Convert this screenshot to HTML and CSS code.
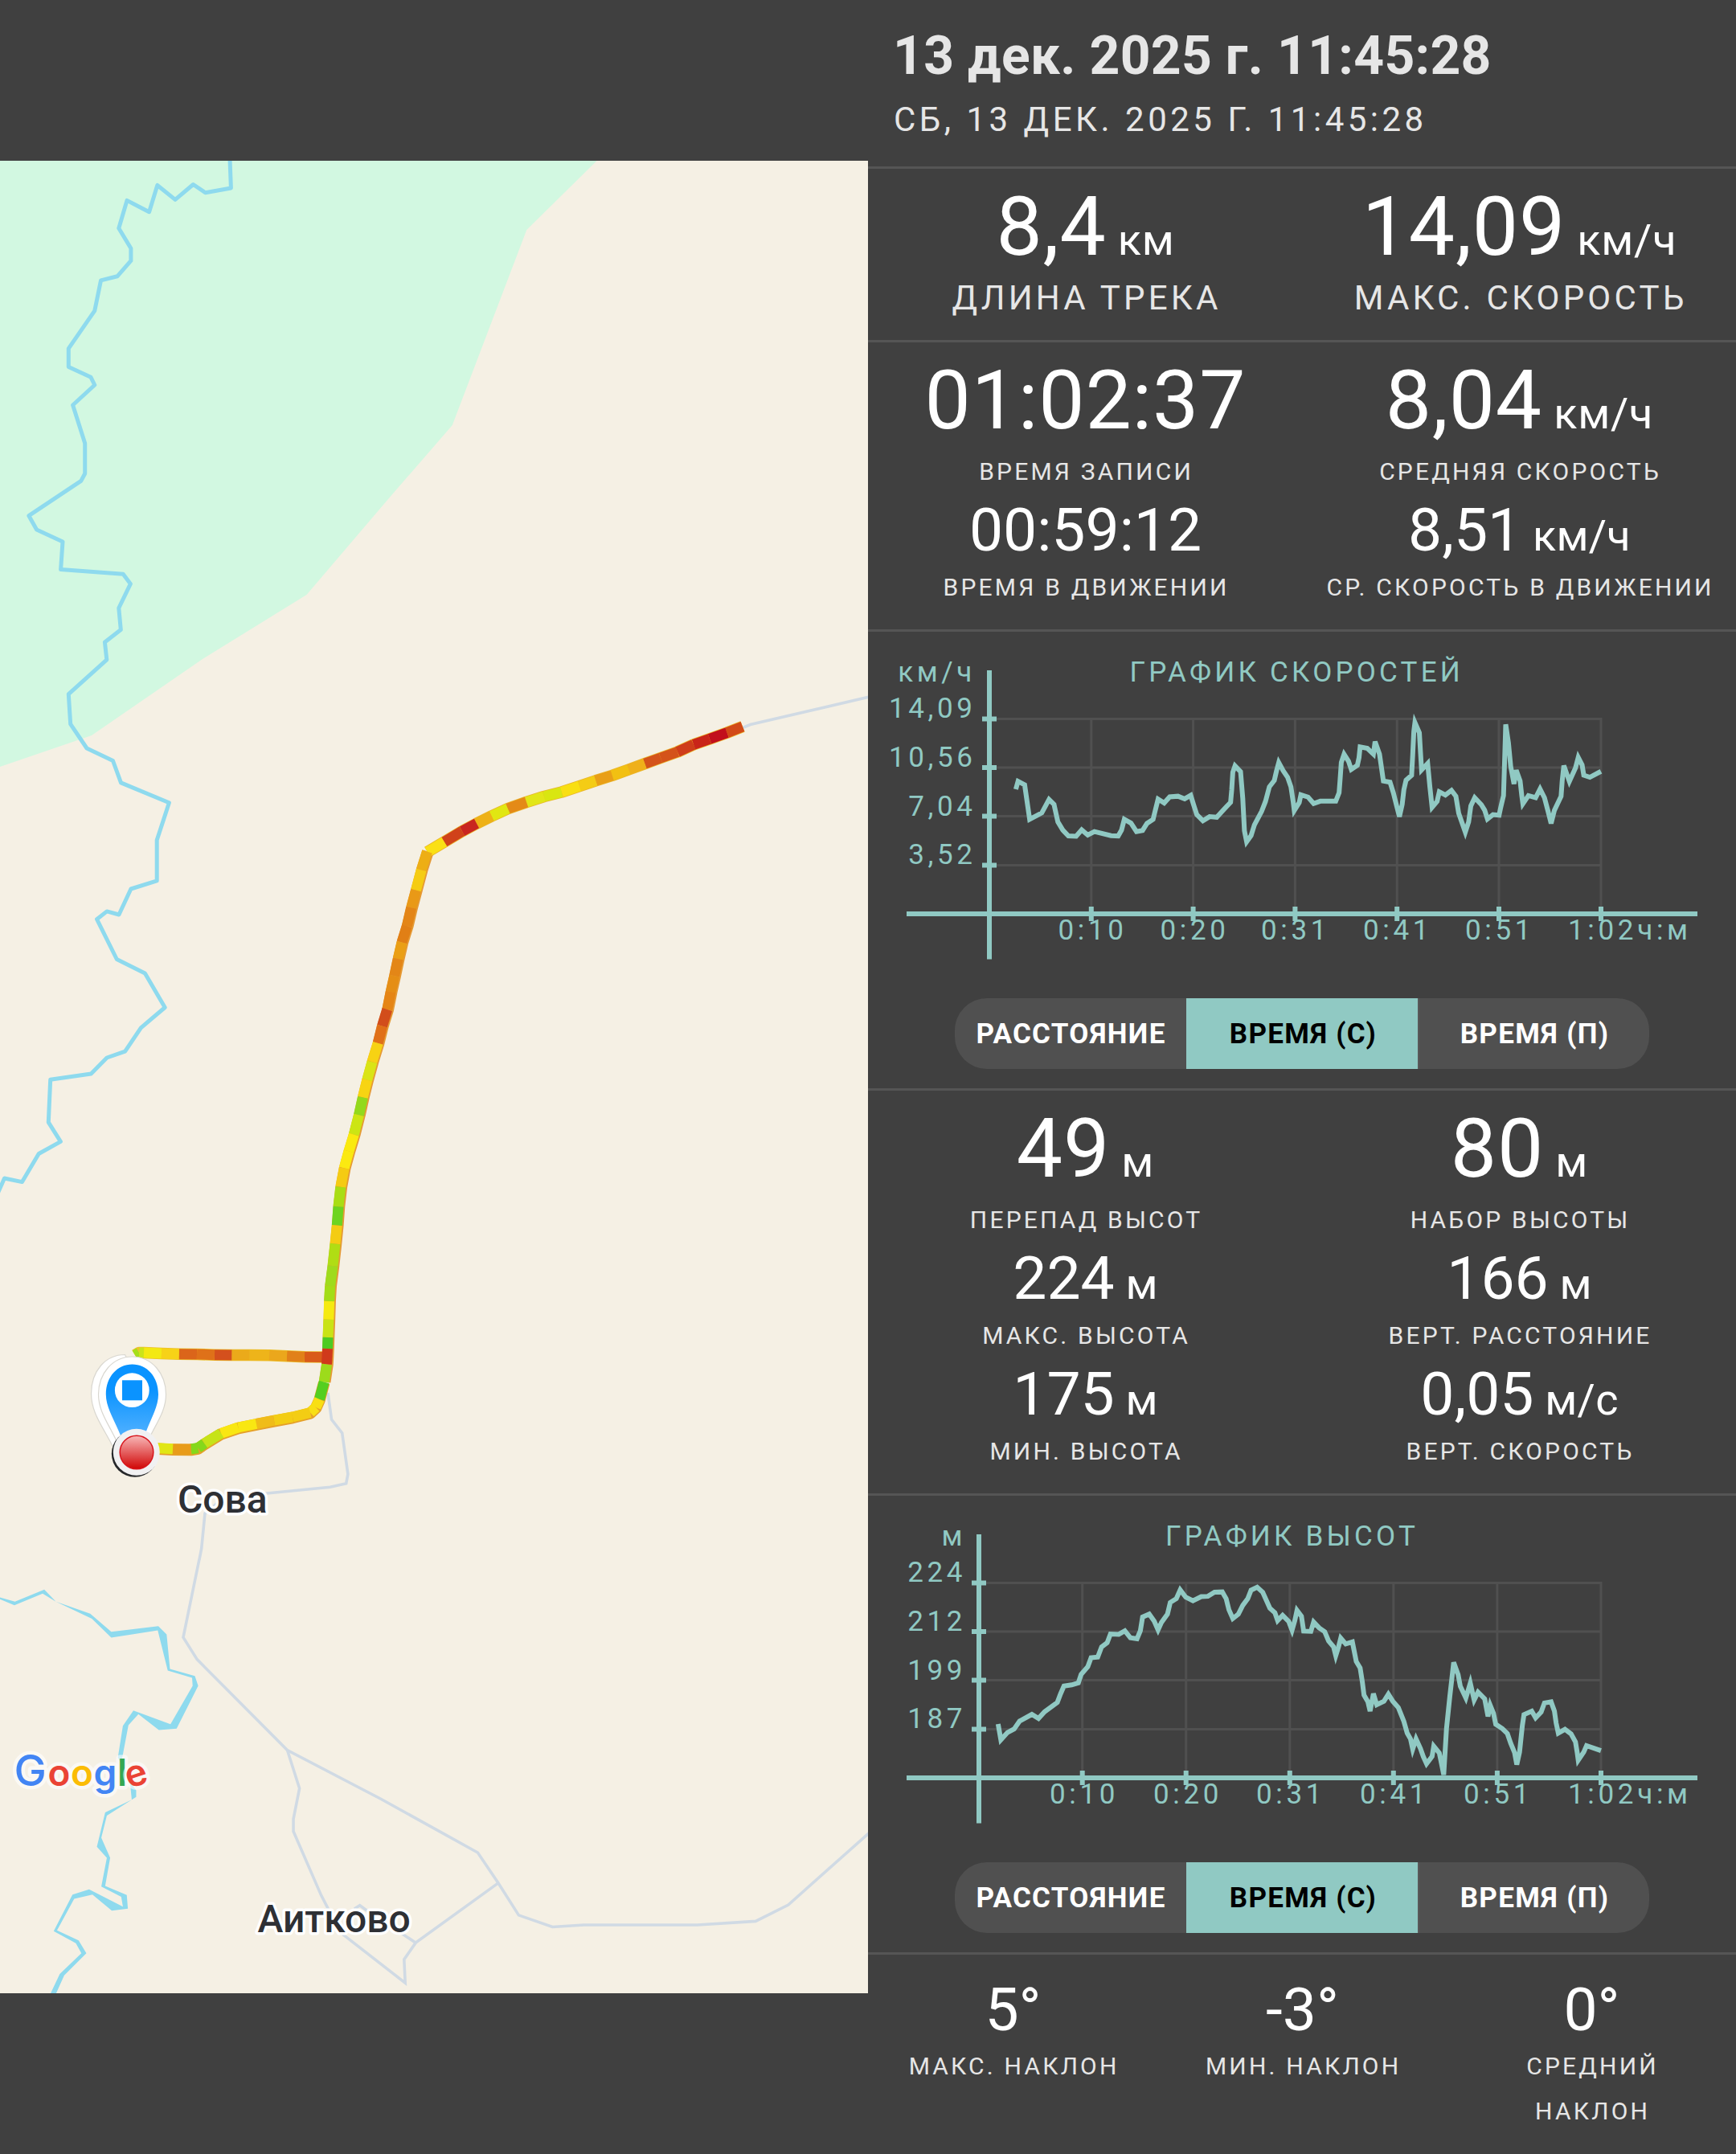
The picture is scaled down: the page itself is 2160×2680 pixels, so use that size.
FILE: index.html
```
<!DOCTYPE html>
<html lang="ru">
<head>
    <meta charset="UTF-8">
    <meta name="viewport" content="width=device-width, initial-scale=1.0">
    <title>13 дек. 2025 г. 11:45:28</title>
    <link rel="stylesheet" href="styles.css">
</head>
<body>
    <main class="screen">
        <!-- Карта с треком -->
        <section class="map-pane">
            <svg class="map" viewBox="0 200 1080 2280">
                <defs>
                    <linearGradient id="pin-blue" x1="0" y1="0" x2="0" y2="1">
                        <stop offset="0" stop-color="#0a93ff"/>
                        <stop offset="0.35" stop-color="#0a93ff"/>
                        <stop offset="1" stop-color="#4fb0ff"/>
                    </linearGradient>
                    <linearGradient id="dot-red" x1="0" y1="0" x2="0" y2="1">
                        <stop offset="0" stop-color="#f8b8b8"/>
                        <stop offset="1" stop-color="#d00505"/>
                    </linearGradient>
                </defs>

                <!-- лес -->
                <path class="forest" d="M0 200H742.6L655.3 286 562.8 529 484.7 619 381.5 740 252 820 114 915 0 954Z"/>

                <!-- реки -->
                <polyline class="river" points="286,198 287.4,234 255.5,239.7 240.4,229.5 218,248.4 195.8,230.5 185.6,263.7 158,249.4 147.8,284 162.9,309 162.9,324.4 145.9,343.8 125.5,348.9 117.8,386.6 85.3,433.6 85.3,456.5 113,469.3 117.8,479 90.6,504 105.7,551.4 105.7,589.2 100.8,598.4 35.9,641.7 45.6,659 78,673.9 75.6,708.6 153.2,714.2 162.4,726.4 147.8,756.5 150.3,783.6 130.4,798.9 132.8,820.8 85.3,863.7 87.7,900.9 108,931 140.5,946.5 150.5,973.9 210.4,998.8 195.2,1045.3 195.2,1095.9 162.9,1106 148,1138 133,1133.9 120.5,1143.7 145.3,1193.5 180.4,1211 205.2,1253.5 175.3,1278.8 155.6,1308.2 133,1316 113.3,1336 62.7,1343.3 60.3,1396.3 75.4,1420.4 48.2,1435.5 27.5,1470.6 5.5,1466 -3,1485"/>
                <g transform="translate(0 1940) scale(.68878 .35714)">
                    <path class="river-area" d="M0 133L27 148 80 106 101 148 163 190 201 253 286 233 301 262 307 382 352 407 358 441 319 590 287 595 250 540 232 578 220 700 236 780 246 805 246 828 193 893 183 970 199 1040 190 1138 229 1170 231 1217 202 1224 167 1168 134 1183 103 1293 142 1328 156 1373 116 1450 101 1514H91L108 1445 147 1373 137 1338 97 1296 131 1168 161 1150 222 1210 219 1176 183 1140 193 1040 175 1002 190 882 238 838 235 780 213 690 222 580 241 527 308 575 348 441 347 413 303 388 285 248 201 273 166 207 101 148 77 120 26 160 0 139Z"/>
                    <!-- дороги внизу -->
                    <g class="road">
                        <polyline points="360,0 331,272 356,349 519,665 688,835 863,1022 900,1128 937,1240 998,1281 1055,1274 1260,1274 1365,1261 1424,1204 1572,950"/>
                        <polyline points="519,665 541,798 530,905 530,948 580,1170 592,1215 620,1308 732,1476 730,1394 751,1336 900,1128"/>
                        <polyline points="751,1336 660,1220 650,1206 640,1218"/>
                    </g>
                </g>
                <g class="road">
                    <polyline points="408,1733 412.5,1766 425.7,1783 432.9,1834 430.7,1845.7 410.7,1850.3 332,1858 278,1864 255,1883 250.7,1926.7 248,1940.5"/>
                    <polyline points="923.8,905.7 933.6,901.5 1082,867"/>
                </g>

                <!-- цветные отрезки трека рисует скрипт -->
                <g id="track"></g>

                <!-- финиш -->
                <path class="pin-back" d="M155.5 1685.5C131 1685.5 113.5 1706 113.5 1734C113.5 1758 128 1775 141 1801H169L190 1750Z"/>
                <path class="pin-front" d="M164.5 1688C140 1688 122.5 1709 122.5 1735C122.5 1759 139 1776 150 1804H179C190 1776 206.5 1759 206.5 1735C206.5 1709 189 1688 164.5 1688Z"/>
                <path fill="url(#pin-blue)" d="M164.5 1697.5C146 1697.5 131.8 1713 131.8 1735C131.8 1751 142 1766 150 1786H180C187 1766 197 1751 197 1735C197 1713 183 1697.5 164.5 1697.5Z"/>
                <circle cx="164.3" cy="1729.7" r="21.4" fill="#fff"/>
                <rect x="152" y="1717.3" width="25" height="25" fill="#0a93ff"/>

                <!-- старт -->
                <circle cx="167.8" cy="1808.8" r="29" fill="#26282a"/>
                <circle cx="169.8" cy="1806.8" r="29" fill="#f1f1f2"/>
                <circle cx="170" cy="1807" r="20.8" fill="url(#dot-red)" stroke="#d8141c" stroke-width="1.5"/>

                <text class="place" x="221" y="1881.5">Сова</text>
                <text class="place" x="320.5" y="2403.5">Аитково</text>
                <text class="google" y="2222"><tspan class="google-g" x="17.5" fill="#4285f4">G</tspan><tspan x="59.5" fill="#ea4335">o</tspan><tspan x="88" fill="#fbbc05">o</tspan><tspan x="116.500" fill="#4285f4">g</tspan><tspan x="146" fill="#34a853">l</tspan><tspan x="160.500" dy="3.500" rotate="-18" fill="#ea4335">e</tspan></text>
            </svg>
        </section>

        <!-- Статистика -->
        <section class="stats-pane">
            <header class="track-header">
                <h1>13 дек. 2025 г. 11:45:28</h1>
                <p>Сб, 13 дек. 2025 г. 11:45:28</p>
            </header>

            <div class="block block-main">
                <div class="col">
                    <div class="value big">8,4<span class="unit"> км</span></div>
                    <div class="label large">Длина трека</div>
                </div>
                <div class="col">
                    <div class="value big">14,09<span class="unit"> км/ч</span></div>
                    <div class="label large">Макс. скорость</div>
                </div>
            </div>

            <div class="block">
                <div class="col">
                    <div class="value big">01:02:37</div>
                    <div class="label">Время записи</div>
                    <div class="value">00:59:12</div>
                    <div class="label">Время в движении</div>
                </div>
                <div class="col">
                    <div class="value big">8,04<span class="unit"> км/ч</span></div>
                    <div class="label">Средняя скорость</div>
                    <div class="value">8,51<span class="unit"> км/ч</span></div>
                    <div class="label">Ср. скорость в движении</div>
                </div>
            </div>

            <div class="chart-block">
                <svg class="chart" viewBox="0 0 1080 456">
                    <path class="grid" d="M151 108.5H912M151 169H912M151 229.5H912M151 290.5H912M277.8 108V351M404.6 108V351M531.4 108V351M658.2 108V351M785 108V351M912 107V351"/>
                    <path class="axis" d="M48 351H1032M151 48V407.5"/>
                    <path class="axis" d="M142 108.5H160M142 169H160M142 229.5H160M142 290.5H160M277.8 342V360M404.6 342V360M531.4 342V360M658.2 342V360M785 342V360M912 342V360"/>
                    <g transform="translate(0 4) scale(.68878 .36352)">
                        <polyline class="curve" points="267,528 271,501 283,513 292,631 314,609 327,563 336,580 343,640 352,668 362,688 376,689 386,667 397,685 409,673 439,687 452,688 458,668 463,631 475,644 485,673 496,669 504,645 515,631 519,600 524,562 535,575 545,554 560,552 572,561 583,549 588,580 594,615 605,636 617,622 630,624 643,597 655,573 657,530 659,470 663,448 673,468 677,560 680,670 684,708 692,687 698,650 711,604 718,570 725,520 734,498 738,465 742,437 750,465 758,487 764,520 768,570 770,601 779,574 782,547 795,555 805,577 817,569 845,569 851,540 853,490 855,436 860,408 868,432 873,460 884,446 887,420 889,383 902,388 913,408 916,365 924,408 928,460 931,500 943,504 949,540 955,585 960,622 965,580 968,530 972,497 982,480 984,410 986,330 988,300 996,335 998,400 1000,462 1011,440 1015,520 1019,590 1028,570 1032,537 1043,548 1054,532 1062,552 1067,610 1074,648 1079,675 1085,640 1089,585 1096,557 1108,581 1114,600 1119,630 1129,615 1140,617 1143,590 1148,550 1150,430 1152,306 1157,370 1161,450 1167,510 1171,463 1178,500 1181,550 1183,578 1193,550 1206,557 1214,527 1222,557 1228,600 1234,645 1240,600 1252,552 1254,500 1257,447 1267,501 1278,455 1283,419 1290,445 1293,480 1304,487 1324,467"/>
                    </g>
                    <text class="chart-title" x="533.2" y="61.8">ГРАФИК СКОРОСТЕЙ</text>
                    <g class="y-labels">
                        <text x="134" y="61.8">км/ч</text>
                        <text x="134.5" y="106.5">14,09</text>
                        <text x="134.5" y="167.5">10,56</text>
                        <text x="134.5" y="228.5">7,04</text>
                        <text x="134.5" y="289">3,52</text>
                    </g>
                    <g class="x-labels">
                        <text x="279.5" y="383">0:10</text>
                        <text x="406.5" y="383">0:20</text>
                        <text x="532" y="383">0:31</text>
                        <text x="659" y="383">0:41</text>
                        <text x="786" y="383">0:51</text>
                        <text x="914" y="383">1:02</text>
                        <text x="991" y="383">ч:м</text>
                    </g>
                </svg>
                <div class="tabs">
                    <button class="tab">РАССТОЯНИЕ</button>
                    <button class="tab active">ВРЕМЯ (С)</button>
                    <button class="tab">ВРЕМЯ (П)</button>
                </div>
            </div>

            <div class="block">
                <div class="col">
                    <div class="value big">49<span class="unit"> м</span></div>
                    <div class="label">Перепад высот</div>
                    <div class="value">224<span class="unit"> м</span></div>
                    <div class="label">Макс. высота</div>
                    <div class="value">175<span class="unit"> м</span></div>
                    <div class="label">Мин. высота</div>
                </div>
                <div class="col">
                    <div class="value big">80<span class="unit"> м</span></div>
                    <div class="label">Набор высоты</div>
                    <div class="value">166<span class="unit"> м</span></div>
                    <div class="label">Верт. расстояние</div>
                    <div class="value">0,05<span class="unit"> м/с</span></div>
                    <div class="label">Верт. скорость</div>
                </div>
            </div>

            <div class="chart-block">
                <svg class="chart" viewBox="0 0 1080 456">
                    <path class="grid" d="M138 108.5H912M138 169H912M138 229.5H912M138 290.5H912M266.7 108V351M395.7 108V351M524.8 108V351M653.8 108V351M782.9 108V351M912 107V351"/>
                    <path class="axis" d="M48 351H1032M138 48V407.5"/>
                    <path class="axis" d="M129 108.5H147M129 169H147M129 229.5H147M129 290.5H147M266.7 342V360M395.7 342V360M524.8 342V360M653.8 342V360M782.9 342V360M912 342V360"/>
                    <g transform="translate(0 -1) scale(.68878 .36352)">
                        <polyline class="curve" points="235,784 240,838 252,813 264,801 274,774 296,751 308,765 319,742 342,710 348,680 354,654 368,650 380,643 385,614 397,588 403,557 415,555 422,520 432,506 438,476 453,477 464,465 474,489 486,492 492,465 496,418 508,408 517,432 524,462 530,437 541,408 546,368 557,355 564,325 574,350 587,362 602,348 614,347 626,333 640,332 647,355 652,393 659,423 669,408 677,378 686,355 692,326 703,316 713,333 719,358 726,388 735,403 740,430 749,412 760,433 766,463 771,430 775,395 783,415 787,466 800,467 805,435 815,455 825,468 832,500 841,520 845,550 850,520 854,490 863,510 875,503 882,570 889,592 893,640 896,685 903,708 907,740 913,680 919,718 932,706 940,682 948,706 958,728 968,775 974,815 980,835 984,870 990,835 998,868 1003,895 1009,920 1019,895 1022,860 1032,883 1036,920 1040,958 1045,800 1051,690 1058,573 1066,615 1070,655 1080,695 1088,644 1095,702 1102,675 1114,698 1120,758 1124,720 1130,748 1134,785 1146,800 1155,817 1161,850 1168,882 1172,923 1177,880 1182,790 1185,752 1199,740 1206,763 1216,743 1222,712 1234,708 1240,740 1243,780 1247,815 1259,802 1270,818 1278,845 1281,880 1283,908 1293,880 1298,858 1324,875"/>
                    </g>
                    <text class="chart-title" x="527.5" y="61.8">ГРАФИК ВЫСОТ</text>
                    <g class="y-labels">
                        <text x="122" y="61.8">м</text>
                        <text x="122" y="106.5">224</text>
                        <text x="122" y="167.5">212</text>
                        <text x="122" y="228.5">199</text>
                        <text x="122" y="289">187</text>
                    </g>
                    <g class="x-labels">
                        <text x="269" y="383">0:10</text>
                        <text x="398" y="383">0:20</text>
                        <text x="526" y="383">0:31</text>
                        <text x="655" y="383">0:41</text>
                        <text x="784" y="383">0:51</text>
                        <text x="914" y="383">1:02</text>
                        <text x="991" y="383">ч:м</text>
                    </g>
                </svg>
                <div class="tabs">
                    <button class="tab">РАССТОЯНИЕ</button>
                    <button class="tab active">ВРЕМЯ (С)</button>
                    <button class="tab">ВРЕМЯ (П)</button>
                </div>
            </div>

            <div class="block block-slope">
                <div class="col">
                    <div class="value">5°</div>
                    <div class="label">Макс. наклон</div>
                </div>
                <div class="col">
                    <div class="value">-3°</div>
                    <div class="label">Мин. наклон</div>
                </div>
                <div class="col">
                    <div class="value">0°</div>
                    <div class="label">Средний наклон</div>
                </div>
            </div>
        </section>
    </main>

    <script>
        // Точки трека: x, y и цвет отрезка, который ведёт в эту точку
        var out = [
            [924, 904], [904.6, 911.6, '#d24a17'], [883, 919.4, '#c20f1c'], [863, 926.3, '#c92419'], [843, 935.5, '#cf3d1a'],
            [822, 943, '#d4531a'], [802.3, 950.2, '#d4531a'], [782.2, 957.5, '#efb01a'], [761.7, 964.9, '#f2c012'],
            [741.2, 971.3, '#e99f17'], [721, 978.2, '#f4cc15'], [698.8, 985.5, '#f9df12'], [676.9, 991, '#d9e611'],
            [655, 998, '#e2e618'], [631.8, 1006.2, '#e48a17'], [611.7, 1015.4, '#e1e712'], [593, 1024.6, '#eeb116'],
            [575, 1034.2, '#c9251f'], [552.8, 1047.5, '#d0421a'], [531.8, 1060, '#fae015']
        ];
        var back = [
            [531.5, 1059.5], [524.2, 1082.4, '#edae15'], [517.5, 1107.7, '#f5cc13'], [511.7, 1129.3, '#e99917'],
            [506.3, 1152.2, '#e38517'], [500, 1172.4, '#e17f15'], [495.2, 1193, '#ea9f15'], [490.7, 1214.2, '#e38617'],
            [486.2, 1234, '#e58e15'], [481.8, 1256, '#e58515'], [475.5, 1276.6, '#d24d1b'], [470.2, 1297.8, '#e07018'],
            [463, 1321.2, '#f7d213'], [456.8, 1343.7, '#dae415'], [451.4, 1365.3, '#f7d413'], [446.5, 1387.3, '#93d91c'],
            [440.3, 1411.6, '#cce514'], [434, 1432.3, '#faea0f'], [428.2, 1453.4, '#fbe911'], [423.8, 1476.8, '#f5cb13'],
            [421, 1501.2, '#a9dd14'], [419.3, 1524.6, '#6dd420'], [417, 1547.5, '#f4cc13'], [414, 1575, '#b0dd14'],
            [410.7, 1600, '#9fdb1c'], [409.6, 1619, '#a3dd16'], [408.9, 1641.7, '#f5ea10'], [408, 1664, '#c9e315'],
            [407.5, 1678, '#4dcb22'], [406.5, 1697.5, '#d0391b'], [403.2, 1719.5, '#9ddb1b'], [397.5, 1741, '#54cf20'],
            [393, 1751, '#f8df14'], [386, 1757.5, '#f8df14'], [364, 1763, '#f3cd14'], [341, 1767.2, '#f3cd14'],
            [319, 1771.5, '#f0bc18'], [296.5, 1776, '#f9e712'], [275, 1783.3, '#f9e712'], [254.3, 1796, '#c6e318'],
            [246.4, 1801.5, '#85d81a'], [237.5, 1803, '#85d81a'], [215, 1802.7, '#e89c1a'], [192, 1801.5, '#e1e614']
        ];
        var branch = [
            [168, 1686], [173, 1683, '#a5df1a'], [179, 1683, '#cbe41a'], [201, 1684, '#f3e912'], [222.9, 1684.7, '#f7d217'],
            [245, 1685, '#db651a'], [267, 1685.7, '#df7119'], [288.6, 1686, '#d4501d'], [310.7, 1686, '#ebaa1a'],
            [335, 1686.3, '#eeb41a'], [357, 1687.3, '#eba71c'], [379, 1688.3, '#e18119'], [402, 1688.5, '#d95b1a']
        ];

        var track = document.getElementById('track');

        function addLine(points, color, className) {
            var line = document.createElementNS('http://www.w3.org/2000/svg', 'polyline');
            line.setAttribute('points', points.map(function (p) { return p[0] + ',' + p[1]; }).join(' '));
            line.setAttribute('stroke', color);
            line.setAttribute('class', className);
            track.appendChild(line);
        }

        function drawTrack(points) {
            for (var i = 1; i < points.length; i++) {
                addLine([points[i - 1], points[i]], points[i][2], 'segment');
            }
        }

        // нижний слой — первый проход по той же дороге
        addLine(out, '#e9b52c', 'under');
        addLine(back.slice(0, 31).map(function (p) { return [p[0] + 1, p[1]]; }), '#e59a35', 'under');
        addLine(back.slice(30).map(function (p) { return [p[0], p[1] + 1]; }), '#e5a02a', 'under');
        addLine(branch, '#ecc02c', 'under');
        drawTrack(out);
        drawTrack(branch);
        drawTrack(back);
    </script>
</body>
</html>
```
FILE: styles.css
```
* {
    box-sizing: border-box;
}

body {
    margin: 0;
    background: #404040;
    font-family: Roboto, 'Noto Sans', sans-serif;
    color: #fff;
}

.screen {
    display: grid;
    grid-template-columns: 1080px 1080px;
    width: 2160px;
    height: 2680px;
    overflow: hidden;
}

/* Карта */
.map-pane {
    display: flex;
    align-items: center;
}

.map {
    display: block;
    width: 1080px;
    height: 2280px;
    background: #f5f0e4;
}

.forest {
    fill: #d2f8e1;
}

.river {
    fill: none;
    stroke: #8edaee;
    stroke-width: 5;
    stroke-linejoin: round;
}

.river-area {
    fill: #8edaee;
}

.road polyline {
    fill: none;
    stroke: #d0dae4;
    stroke-width: 3.6px;
    vector-effect: non-scaling-stroke;
}

.segment {
    fill: none;
    stroke-width: 13;
}

.under {
    fill: none;
    stroke-width: 14.6;
    stroke-linejoin: round;
}

.pin-back,
.pin-front {
    fill: #fff;
    stroke: #d9d7d0;
    stroke-width: 1.2;
}

.place {
    font-size: 48px;
    font-weight: 500;
    fill: #2e3035;
    stroke: #fff;
    stroke-width: 7;
    stroke-linejoin: round;
    paint-order: stroke;
}

.google {
    font-family: Inter, sans-serif;
    font-size: 46px;
    font-weight: 600;
    stroke: rgba(255, 255, 255, 0.6);
    stroke-width: 9;
    stroke-linejoin: round;
    paint-order: stroke;
}

.google-g {
    font-size: 54px;
    font-weight: 500;
}

/* Правая колонка */
.stats-pane > * {
    border-bottom: 3px solid #555;
}

.stats-pane > *:last-child {
    border-bottom: 0;
}

.track-header {
    height: 210px;
    padding: 30px 31px 0;
    color: #e6e6e6;
}

.track-header h1 {
    margin: 0;
    font-size: 66px;
    font-weight: 700;
    line-height: 80px;
    letter-spacing: 0.3px;
}

.track-header p {
    margin: 9px 0 0 1px;
    font-size: 42px;
    line-height: 60px;
    letter-spacing: 4.5px;
    text-transform: uppercase;
}

.block {
    display: flex;
    padding: 12px 0 24px;
}

.block-main {
    padding-bottom: 23px;
}

.col {
    flex: 1 1 0;
    text-align: center;
    white-space: nowrap;
}

.value {
    margin-top: 1px;
    padding-left: 1px;
    font-size: 75px;
    line-height: 86px;
}

.value.big {
    margin-top: 0;
    font-size: 102px;
    line-height: 120px;
    letter-spacing: 0.8px;
}

.unit {
    font-size: 54px;
    line-height: 1;
    letter-spacing: 0.3px;
    white-space: pre;
}

.big .unit {
    letter-spacing: 0.8px;
}

.label {
    padding: 1px 0 0 3.2px;
    font-size: 30px;
    line-height: 56px;
    letter-spacing: 3.2px;
    text-transform: uppercase;
    color: #e6e6e6;
}

.label.large {
    padding: 0 0 0 4.2px;
    font-size: 42px;
    line-height: 58px;
    letter-spacing: 4.2px;
}

.block-slope {
    padding: 24px 0 0;
}

.block-slope .label {
    padding: 0 40px 0 43.2px;
    white-space: normal;
}

/* Графики */
.chart-block {
    padding-bottom: 24px;
}

.chart {
    display: block;
    width: 1080px;
    height: 456px;
}

.grid {
    fill: none;
    stroke: #505050;
    stroke-width: 3;
}

.axis {
    fill: none;
    stroke: #90c9c3;
    stroke-width: 6;
}

.curve {
    fill: none;
    stroke: #90c9c3;
    stroke-width: 6px;
    vector-effect: non-scaling-stroke;
}

.chart text {
    font-size: 35px;
    letter-spacing: 4.6px;
    fill: #90c9c3;
}

.chart .chart-title {
    letter-spacing: 4.2px;
}

.chart-title,
.x-labels {
    text-anchor: middle;
}

.y-labels {
    text-anchor: end;
}

.tabs {
    display: grid;
    grid-template-columns: repeat(3, 288px);
    width: 864px;
    height: 88px;
    margin: 0 auto;
    border-radius: 40px;
    overflow: hidden;
    background: #505050;
}

.tab {
    padding: 1px 0 0 1px;
    border: 0;
    border-left: 2px solid #595959;
    background: none;
    color: #fff;
    font: 700 35px/87px Roboto, 'Noto Sans', sans-serif;
    letter-spacing: 1.3px;
}

.tab:first-child {
    border-left: 0;
}

.tab.active {
    background: #90c9c3;
    border-color: #90c9c3;
    color: #000;
}
```
